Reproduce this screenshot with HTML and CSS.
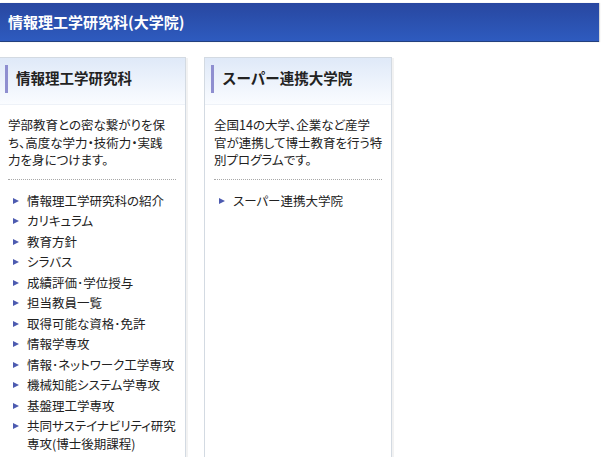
FILE: index.html
```html
<!DOCTYPE html>
<html lang="ja">
<head>
<meta charset="utf-8">
<link rel="stylesheet" href="styles.css">
</head>
<body>
<div class="page">
  <div class="banner">情報理工学研究科(大学院)</div>
  <div class="cards">
    <div class="card first">
      <div class="card-head"><h2 class="card-title">情報理工学研究科</h2></div>
      <div class="card-body">
        <p class="desc">学部教育との密な繋がりを保<br>ち、高度な学力・技術力・実践<br>力を身につけます。</p>
        <ul class="links">
          <li>情報理工学研究科の紹介</li>
          <li>カリキュラム</li>
          <li>教育方針</li>
          <li>シラバス</li>
          <li>成績評価･学位授与</li>
          <li>担当教員一覧</li>
          <li>取得可能な資格･免許</li>
          <li>情報学専攻</li>
          <li>情報･ネットワーク工学専攻</li>
          <li>機械知能システム学専攻</li>
          <li>基盤理工学専攻</li>
          <li>共同サステイナビリティ研究<br>専攻(博士後期課程)</li>
        </ul>
      </div>
    </div>
    <div class="card">
      <div class="card-head"><h2 class="card-title">スーパー連携大学院</h2></div>
      <div class="card-body">
        <p class="desc">全国14の大学、企業など産学<br>官が連携して博士教育を行う特<br>別プログラムです。</p>
        <ul class="links">
          <li>スーパー連携大学院</li>
        </ul>
      </div>
    </div>
  </div>
</div>
</body>
</html>
```
FILE: styles.css
```css
html, body {
  margin: 0;
  padding: 0;
  background: #ffffff;
}
body {
  font-family: "Noto Sans CJK JP", "Noto Sans", sans-serif;
  color: #222222;
  overflow: hidden;
  font-feature-settings: "palt";
}
.page {
  padding-top: 3px;
}
.banner {
  width: 599px;
  height: 39px;
  box-sizing: border-box;
  background: linear-gradient(#2847a0, #2e5bbf);
  border-bottom: 1px solid #23407e;
  box-shadow: 1px 0 1px rgba(0,0,0,0.15);
  color: #ffffff;
  font-weight: bold;
  font-size: 15px;
  line-height: 38px;
  padding-left: 8px;
}
.cards {
  display: flex;
  gap: 18px;
  margin-top: 15px;
  margin-left: -2px;
  align-items: flex-start;
}
.card {
  width: 188px;
  height: 420px;
  box-sizing: border-box;
  border: 1px solid #d3dae2;
  box-shadow: 3px 0 0 -1px #f2f2f2;
  background: #ffffff;
}
.card-head {
  height: 47px;
  box-sizing: border-box;
  background: linear-gradient(#dfe9f8, #fafcff);
  border-bottom: 1px solid #eef2f8;
  padding: 7px 0 0 6px;
}
.card-title {
  margin: 0;
  height: 28px;
  border-left: 3px solid #8f8fd0;
  padding-left: 8px;
  font-size: 14.5px;
  font-weight: bold;
  line-height: 26px;
  color: #222222;
  font-feature-settings: normal;
}
.card-body {
  padding: 11px 9px 0 9px;
}
.desc {
  margin: 0;
  font-size: 12.5px;
  line-height: 17.5px;
  padding-bottom: 10px;
  border-bottom: 1px dotted #a8a8a8;
  width: 168px;
  white-space: nowrap;
}
.links {
  list-style: none;
  margin: 12px 0 0 0;
  padding: 0;
}
.links li {
  position: relative;
  padding-left: 19px;
  font-size: 12.5px;
  line-height: 18px;
  margin-bottom: 2.5px;
  white-space: nowrap;
}
.links li::before {
  content: "";
  position: absolute;
  left: 5px;
  top: 6px;
  width: 0;
  height: 0;
  border-top: 3px solid transparent;
  border-bottom: 3px solid transparent;
  border-left: 6px solid #4d5bb0;
}
```
